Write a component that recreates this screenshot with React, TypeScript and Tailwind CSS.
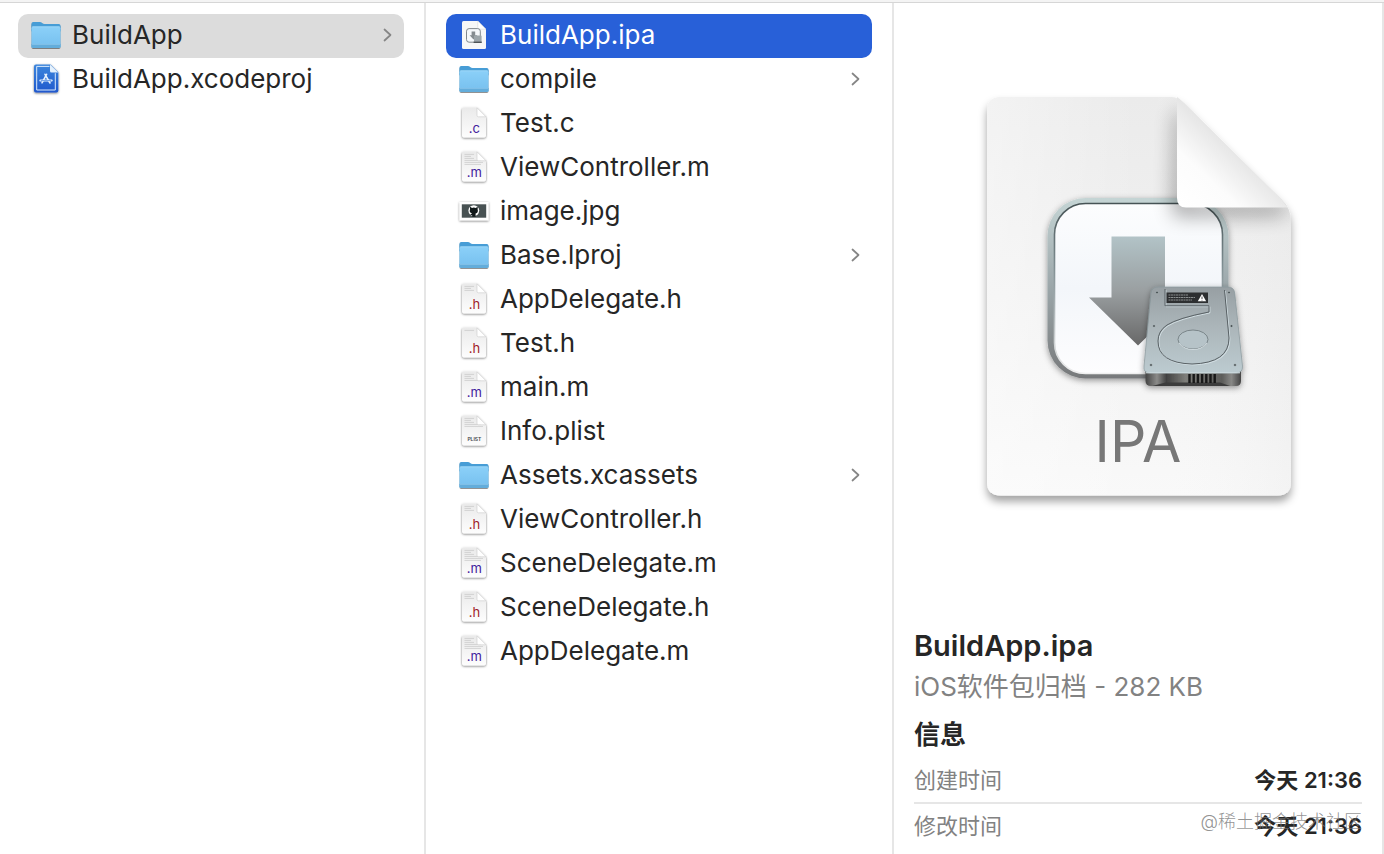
import clsx from "clsx";

type Kind = "folder" | "xcode" | "ipa" | "c" | "m" | "h" | "plist" | "image";

type Entry = {
  name: string;
  kind: Kind;
  lines?: number;
};

const projectFiles: Entry[] = [
  { name: "BuildApp", kind: "folder" },
  { name: "BuildApp.xcodeproj", kind: "xcode" },
];

const sourceFiles: Entry[] = [
  { name: "BuildApp.ipa", kind: "ipa" },
  { name: "compile", kind: "folder" },
  { name: "Test.c", kind: "c", lines: 0 },
  { name: "ViewController.m", kind: "m", lines: 6 },
  { name: "image.jpg", kind: "image" },
  { name: "Base.lproj", kind: "folder" },
  { name: "AppDelegate.h", kind: "h", lines: 3 },
  { name: "Test.h", kind: "h", lines: 1 },
  { name: "main.m", kind: "m", lines: 4 },
  { name: "Info.plist", kind: "plist", lines: 5 },
  { name: "Assets.xcassets", kind: "folder" },
  { name: "ViewController.h", kind: "h", lines: 3 },
  { name: "SceneDelegate.m", kind: "m", lines: 6 },
  { name: "SceneDelegate.h", kind: "h", lines: 3 },
  { name: "AppDelegate.m", kind: "m", lines: 6 },
];

const details = [
  { label: "创建时间", value: "今天 21:36" },
  { label: "修改时间", value: "今天 21:36" },
];

const iconClass = "mb-0.5 size-8 shrink-0 overflow-visible";

// Gradients shared by all the small icons
function IconDefs() {
  return (
    <svg className="absolute size-0" aria-hidden="true">
      <defs>
        <linearGradient id="folder-front" x1="0" y1="0" x2="0" y2="1">
          <stop offset="0" stopColor="#8bd0f8" />
          <stop offset="1" stopColor="#75bfee" />
        </linearGradient>
        <linearGradient id="xcode-page" x1="0" y1="0" x2="0" y2="1">
          <stop offset="0" stopColor="#3c86dc" />
          <stop offset="1" stopColor="#1f58cd" />
        </linearGradient>
        <linearGradient id="doc-page" x1="0" y1="0" x2="0" y2="1">
          <stop offset="0" stopColor="#eaeaea" />
          <stop offset="1" stopColor="#fdfdfd" />
        </linearGradient>
        <filter id="icon-shadow" x="-20%" y="-20%" width="140%" height="150%">
          <feDropShadow dx="0" dy="0.8" stdDeviation="0.8" floodOpacity="0.55" />
        </filter>
      </defs>
    </svg>
  );
}

function FolderIcon() {
  return (
    <svg viewBox="-0.5 -0.5 33 33" className={iconClass} aria-hidden="true">
      <g filter="url(#icon-shadow)">
        <path d="M1 4.5Q1 2.5 3 2.5H9.5Q11 2.5 12 3.5Q13 4.6 14.5 4.6H29Q31 4.6 31 6.6V12H1Z" fill="#469dd6" />
        <path d="M1 9Q1 7.4 2.6 7.4H29.4Q31 7.4 31 9V27.5Q31 29.3 29.2 29.3H2.8Q1 29.3 1 27.5Z" fill="url(#folder-front)" />
      </g>
      <path d="M1.8 7.5H30.2" stroke="#addffb" strokeWidth="0.8" />
      <path d="M1 25.4H31V27.5Q31 29.3 29.2 29.3H2.8Q1 29.3 1 27.5Z" fill="#63addb" />
      <path d="M1.5 25.6H30.5" stroke="#92cbee" strokeWidth="0.8" />
    </svg>
  );
}

function XcodeIcon() {
  return (
    <svg viewBox="0 0 32 32" className={iconClass} aria-hidden="true">
      <path
        d="M6 1.5H20.5L28.3 9.3V27.5Q28.3 29.5 26.3 29.5H6Q4 29.5 4 27.5V3.5Q4 1.5 6 1.5Z"
        fill="url(#xcode-page)"
        filter="url(#icon-shadow)"
      />
      <path d="M19.5 3.4H6.7V27H25.3V10.2" fill="none" stroke="#d8e9fc" strokeWidth="1" />
      <path d="M20 1.5L28.3 9.6H21.5Q20 9.6 20 8.1Z" fill="#e4f1fd" />
      <g fill="none" stroke="#e6f1fd" strokeLinecap="round">
        <path d="M16.6 11.3L12 19.8M15 11.3L20 20" strokeWidth="1.6" />
        <path d="M10.3 17.6H21.7" strokeWidth="2" />
      </g>
      <path d="M10.8 17.6H21.2" stroke="#397bdc" strokeWidth="0.7" />
    </svg>
  );
}

function ImageIcon() {
  return (
    <svg viewBox="0 0 32 32" className={iconClass} aria-hidden="true">
      <rect x="1.5" y="7" width="29" height="18.4" fill="#fff" filter="url(#icon-shadow)" />
      <rect x="3.8" y="9.3" width="24.4" height="13.4" fill="#485253" />
      <circle cx="15.8" cy="15.6" r="5.4" fill="#fff" />
      <path
        d="M12.2 11.8L14 12.9Q15.8 12.3 17.7 12.9L19.6 11.8Q20 13.2 19.6 14Q20.7 17.8 17.6 18.4V21.8H14.2V20.3Q12.7 20.3 12 19.2Q13.2 19.4 14 18.4Q10.8 17.7 12.1 14Q11.7 12.9 12.2 11.8Z"
        fill="#11191a"
      />
    </svg>
  );
}

const smallPagePath =
  "M5.2 .8H19L28 9.8V28.6Q28 30.4 26.2 30.4H5.8Q4 30.4 4 28.6V2.6Q4 .8 5.2 .8Z";

function IpaIcon() {
  return (
    <svg viewBox="0 0 32 32" className={iconClass} aria-hidden="true">
      <path d="M5.5 2H19.8L28 10.2V28.5Q28 30 26.5 30H5.5Q4 30 4 28.5V3.5Q4 2 5.5 2Z" fill="#f7f7f7" />
      <path d="M19.8 2L28 10.2H21.2Q19.8 10.2 19.8 8.8Z" fill="#fff" stroke="#d2d2d2" strokeWidth="0.5" />
      <rect x="8.5" y="9.6" width="13.8" height="13.6" rx="2.6" fill="#f5f8fa" stroke="#737b80" strokeWidth="0.9" />
      <path d="M13.6 12.5H17.2V16.3H19.4L15.5 20.5L11.6 16.3H13.6Z" fill="#858c90" />
      <rect x="16" y="16.5" width="7.6" height="6.5" rx="0.6" fill="#9da6aa" />
      <path d="M15.6 23.3H23.8" stroke="#4e5457" strokeWidth="1.4" />
    </svg>
  );
}

function DocumentIcon({ kind, lines = 0 }: { kind: Kind; lines?: number }) {
  const isPlist = kind === "plist";
  return (
    <svg viewBox="0 0 32 32" className={iconClass} aria-hidden="true">
      <path d={smallPagePath} fill="url(#doc-page)" filter="url(#icon-shadow)" />
      {Array.from({ length: lines }, (_, i) => (
        <path
          key={i}
          d={`M6.5 ${3.4 + i * 2}H${i < 3 ? 16 - (i % 2) * 3 : 25 - (i % 2) * 2}`}
          stroke="#c6c6c6"
          strokeWidth="0.7"
        />
      ))}
      <path d="M19 .8L28 9.8H20.4Q19 9.8 19 8.4Z" fill="#fff" stroke="#cacaca" strokeWidth="0.6" />
      <text
        x="16.4"
        y="26.4"
        textAnchor="middle"
        className={clsx(
          "font-['Inter',sans-serif]",
          isPlist && "fill-[#444] text-[5px] font-semibold",
          kind === "h" && "fill-[#a01c28] text-[13px]",
          (kind === "m" || kind === "c") && "fill-[#42209c] text-[13px]"
        )}
      >
        {isPlist ? "PLIST" : `.${kind}`}
      </text>
    </svg>
  );
}

function FileIcon({ kind, lines }: { kind: Kind; lines?: number }) {
  if (kind === "folder") return <FolderIcon />;
  if (kind === "xcode") return <XcodeIcon />;
  if (kind === "image") return <ImageIcon />;
  if (kind === "ipa") return <IpaIcon />;
  return <DocumentIcon kind={kind} lines={lines} />;
}

function Chevron() {
  return (
    <svg
      viewBox="0 0 10 14"
      className="mb-0.5 ml-auto h-3.5 w-2.5 shrink-0 fill-none stroke-[#858585]"
      strokeWidth="1.7"
      strokeLinecap="round"
      strokeLinejoin="round"
      aria-hidden="true"
    >
      <path d="M2.5 1.5L8.5 7L2.5 12.5" />
    </svg>
  );
}

function FileList({
  label,
  files,
  selected,
  selectedClass,
}: {
  label: string;
  files: Entry[];
  selected: string;
  selectedClass: string;
}) {
  return (
    <ul aria-label={label}>
      {files.map((file) => (
        <li key={file.name}>
          <button
            type="button"
            aria-current={file.name === selected}
            className={clsx(
              "flex h-11 w-full items-center gap-2.5 rounded-[10px] px-3 text-left text-[26px] leading-8",
              file.name === selected && selectedClass
            )}
          >
            <FileIcon kind={file.kind} lines={file.lines} />
            <span className="truncate pb-0.5">{file.name}</span>
            {file.kind === "folder" && <Chevron />}
          </button>
        </li>
      ))}
    </ul>
  );
}

const pagePath =
  "M1001 97H1172Q1178 97 1184 103L1281 199Q1291 208 1291 221V482Q1291 495.5 1277 495.5H1001Q987 495.5 987 482V111Q987 97 1001 97Z";

const groovePath =
  "M1165 289V305.8H1209V312Q1178 318 1167 325Q1158 331 1158 341Q1158 363 1192 364Q1229 363 1229 338L1224.5 290";

const screws = [
  [1157, 292.5],
  [1229, 292.5],
  [1154, 326],
  [1231.5, 326],
  [1151, 365],
  [1235, 365],
];

function PackagePreview() {
  return (
    <svg viewBox="973 85 330 430" className="mx-auto h-[430px] w-[330px]" role="img" aria-label="IPA">
      <defs>
        <linearGradient id="page" x1="0.5" y1="0" x2="0.5" y2="1">
          <stop offset="0" stopColor="#ebebeb" />
          <stop offset="0.5" stopColor="#f1f1f1" />
          <stop offset="1" stopColor="#f9f9f9" />
        </linearGradient>
        <linearGradient id="page-side" x1="0" y1="0" x2="1" y2="0">
          <stop offset="0" stopColor="#fff" stopOpacity="0.4" />
          <stop offset="0.5" stopColor="#fff" stopOpacity="0" />
          <stop offset="1" stopColor="#ddd" stopOpacity="0.2" />
        </linearGradient>
        <linearGradient id="curl" x1="1182" y1="205" x2="1233" y2="150" gradientUnits="userSpaceOnUse">
          <stop offset="0" stopColor="#fff" />
          <stop offset="0.5" stopColor="#fcfcfc" />
          <stop offset="1" stopColor="#e6e6e6" />
        </linearGradient>
        <linearGradient id="ring" x1="0" y1="0" x2="0" y2="1">
          <stop offset="0" stopColor="#c5d5d5" />
          <stop offset="0.5" stopColor="#9ba6a9" />
          <stop offset="1" stopColor="#77797b" />
        </linearGradient>
        <linearGradient id="ring-line" x1="0" y1="0" x2="0" y2="1">
          <stop offset="0" stopColor="#465355" />
          <stop offset="0.35" stopColor="#7c8b8f" />
          <stop offset="1" stopColor="#efefef" />
        </linearGradient>
        <linearGradient id="panel" x1="0" y1="0" x2="0" y2="1">
          <stop offset="0" stopColor="#fcfdfe" />
          <stop offset="0.5" stopColor="#f3f6fa" />
          <stop offset="1" stopColor="#fdfdfe" />
        </linearGradient>
        <linearGradient id="arrow" x1="0" y1="0" x2="0" y2="1">
          <stop offset="0" stopColor="#b2c3c7" />
          <stop offset="0.5" stopColor="#9a9fa1" />
          <stop offset="1" stopColor="#686868" />
        </linearGradient>
        <linearGradient id="disk" x1="0" y1="0" x2="0" y2="1">
          <stop offset="0" stopColor="#979fa3" />
          <stop offset="0.45" stopColor="#abb5b9" />
          <stop offset="1" stopColor="#bccbd0" />
        </linearGradient>
        <linearGradient id="disk-base" x1="0" y1="0" x2="1" y2="0">
          <stop offset="0" stopColor="#444" />
          <stop offset="0.12" stopColor="#8b8b89" />
          <stop offset="0.22" stopColor="#414141" />
          <stop offset="0.42" stopColor="#7e7e7a" />
          <stop offset="0.8" stopColor="#5c5c5a" />
          <stop offset="0.9" stopColor="#888886" />
          <stop offset="1" stopColor="#444" />
        </linearGradient>
        <filter id="page-shadow" x="-10%" y="-10%" width="120%" height="120%">
          <feDropShadow dx="0" dy="6" stdDeviation="4" floodOpacity="0.36" />
        </filter>
        <filter id="small-shadow" x="-10%" y="-10%" width="120%" height="125%">
          <feDropShadow dx="0" dy="2" stdDeviation="3" floodOpacity="0.4" />
        </filter>
        <filter id="soft" x="-40%" y="-40%" width="180%" height="180%">
          <feGaussianBlur stdDeviation="10" />
        </filter>
        <clipPath id="page-clip">
          <path d={pagePath} />
        </clipPath>
      </defs>

      <path d={pagePath} fill="url(#page)" filter="url(#page-shadow)" />
      <path d={pagePath} fill="url(#page-side)" />

      {/* Installer panel */}
      <rect x="1047.5" y="198" width="181" height="180.5" rx="38" fill="url(#ring)" filter="url(#small-shadow)" />
      <rect x="1054.5" y="203.5" width="168" height="170" rx="31" fill="url(#panel)" stroke="url(#ring-line)" strokeWidth="1.6" />
      <path d="M1111.5 236.5H1165V297.5H1187L1138 345.5L1089 297.5H1111.5Z" fill="url(#arrow)" />

      {/* Folded corner */}
      <g clipPath="url(#page-clip)">
        <path d="M1180 112L1183 206L1285 207L1279 210L1178 211Z" fill="#000" stroke="#000" strokeWidth="9" opacity="0.4" filter="url(#soft)" />
      </g>
      <path d="M1177 97Q1180 99 1184 103L1281 199L1288 207.5H1186Q1177 207.5 1177 198Z" fill="url(#curl)" />

      {/* Hard disk */}
      <g filter="url(#small-shadow)">
        <path d="M1145.5 368H1241V381Q1241 386 1236 386H1151Q1145.5 386 1145.5 381Z" fill="url(#disk-base)" />
        <path
          d="M1158 287H1228Q1234 287 1234.7 293L1242.5 366Q1243 373 1236 373H1150Q1143 373 1144 366L1151 293Q1152 287 1158 287Z"
          fill="url(#disk)"
          stroke="#88979b"
          strokeWidth="0.7"
        />
      </g>
      <path d="M1146 372.8H1240" stroke="#d7e4e8" strokeWidth="1" />
      <path d="M1165.5 382.5H1220L1230 386H1152Z" fill="#3c3c3c" />
      <path d="M1189.5 374V383M1193.7 374V383M1197.9 374V383M1202.1 374V383M1206.3 374V383M1210.5 374V383M1214.7 374V383" stroke="#181818" strokeWidth="2.4" />
      <path d={groovePath} transform="translate(0.9 0.9)" fill="none" stroke="#d6e2e6" strokeWidth="0.9" />
      <path d={groovePath} fill="none" stroke="#596165" strokeWidth="1" />
      <ellipse cx="1193" cy="339.5" rx="15" ry="9.5" fill="#b6c3c8" stroke="#6b767a" strokeWidth="0.8" />
      <path d="M1179 343Q1184 349.5 1193 349.5Q1202 349.5 1207 343" fill="none" stroke="#dfe9ec" strokeWidth="0.8" />
      <rect x="1166.5" y="292.5" width="41.5" height="10.5" fill="#2d2f31" />
      <path d="M1168.5 295H1188M1168.5 297.5H1195M1168.5 300H1192" stroke="#b3b7b9" strokeWidth="0.7" strokeDasharray="2 0.5" />
      <path d="M1202 294L1206.2 301.3H1197.8Z" fill="#fff" />
      <path d="M1202 296.6V299M1202 299.8V300.5" stroke="#222" strokeWidth="0.8" />
      {screws.map(([cx, cy]) => (
        <circle key={`${cx}-${cy}`} cx={cx} cy={cy} r="1.3" fill="#454e51" stroke="#cfd9dc" strokeWidth="0.4" />
      ))}

      <text x="1138" y="462" textAnchor="middle" className="fill-[#777] font-['Inter',sans-serif] text-[57px]">
        IPA
      </text>
    </svg>
  );
}

export default function App() {
  return (
    <div className="flex min-h-screen flex-col bg-white font-['Inter','Noto_Sans_CJK_SC',sans-serif] text-[#262626]">
      <div className="h-[3px] border-b border-[#d6d6d6] bg-[#f4f4f4]" />
      <main className="flex flex-1">
        <nav className="w-[426px] shrink-0 border-r-2 border-[#e6e6e6] pt-[11px] pr-5 pl-[18px]">
          <FileList label="Project" files={projectFiles} selected="BuildApp" selectedClass="bg-[#dcdcdc]" />
        </nav>
        <nav className="w-[468px] shrink-0 border-r-2 border-[#e6e6e6] px-5 pt-[11px]">
          <FileList
            label="BuildApp"
            files={sourceFiles}
            selected="BuildApp.ipa"
            selectedClass="bg-[#2860d8] text-white"
          />
        </nav>
        <section className="relative min-w-0 flex-1 border-r-2 border-[#e6e6e6] px-5 pt-[82px]">
          <PackagePreview />
          <h1 className="mt-[115px] text-[29px] leading-8 font-semibold">BuildApp.ipa</h1>
          <p className="mt-[9px] text-[26px] leading-8 text-[#828282]">iOS软件包归档 - 282 KB</p>
          <h2 className="mt-4 text-[26px] leading-8 font-bold">信息</h2>
          <dl className="mt-[7px] divide-y-2 divide-[#e6e6e6] text-[22px] leading-11">
            {details.map((item) => (
              <div key={item.label} className="flex justify-between">
                <dt className="text-[#828282]">{item.label}</dt>
                <dd className="font-semibold">{item.value}</dd>
              </div>
            ))}
          </dl>
          <span className="pointer-events-none absolute right-5 bottom-5 text-[18px] leading-6 font-light text-[#777]/80">
            @稀土掘金技术社区
          </span>
        </section>
      </main>
      <IconDefs />
    </div>
  );
}
